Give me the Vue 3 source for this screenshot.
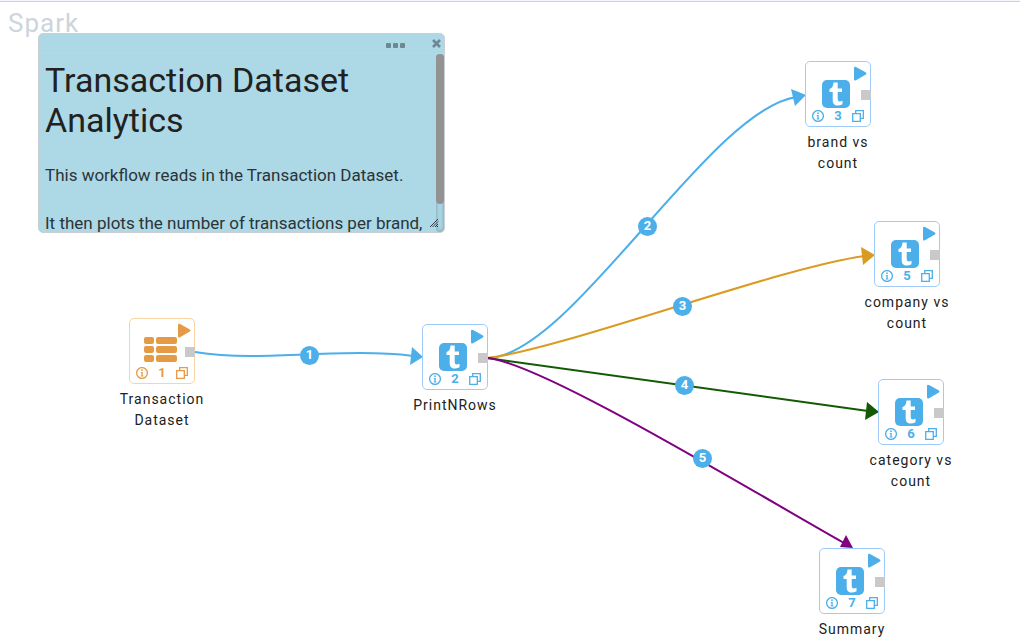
<script setup>
const nodes = [
  { id: 1, x: 129, y: 318, label: 'Transaction Dataset', kind: 'data' },
  { id: 2, x: 422, y: 324, label: 'PrintNRows', kind: 'step' },
  { id: 3, x: 805, y: 61, label: 'brand vs count', kind: 'step' },
  { id: 5, x: 874, y: 221, label: 'company vs count', kind: 'step' },
  { id: 6, x: 878, y: 379, label: 'category vs count', kind: 'step' },
  { id: 7, x: 819, y: 548, label: 'Summary', kind: 'step' }
]

const edges = [
  { id: 1, color: '#4cafe9', d: 'M195 352 C265 363 340 347 413 356', head: '412,347 423,357 410,365', x: 309, y: 355 },
  { id: 2, color: '#4cafe9', d: 'M487 358 C570 358 710 108 797 97', head: '791,89 806,95 795,106', x: 647, y: 226 },
  { id: 3, color: '#da9b22', d: 'M487 358 C560 350 780 267 865 256', head: '861,247 875,255 863,265', x: 682, y: 306 },
  { id: 4, color: '#125a03', d: 'M487 358 L868 411', head: '867,402 879,412 865,420', x: 684, y: 385 },
  { id: 5, color: '#800080', d: 'M487 358 C540 362 750 490 844 543', head: '846,535 853,548 840,547', x: 702, y: 458 }
]
</script>

<template>
  <main class="canvas">
    <h1 class="title">Spark</h1>

    <svg class="edges" aria-hidden="true">
      <g v-for="e in edges" :key="e.id">
        <path :d="e.d" :stroke="e.color" fill="none" stroke-width="2" />
        <polygon :points="e.head" :fill="e.color" />
      </g>
    </svg>

    <span v-for="e in edges" :key="e.id" class="badge" :style="{ left: e.x + 'px', top: e.y + 'px' }">{{ e.id }}</span>

    <section class="note">
      <header class="note-bar">
        <button class="bare" aria-label="More options">
          <svg width="19" height="8" viewBox="0 0 19 8"><rect y="3" width="5" height="5" rx="1" /><rect x="7" y="3" width="5" height="5" rx="1" /><rect x="14" y="3" width="5" height="5" rx="1" /></svg>
        </button>
        <button class="bare close" aria-label="Close">
          <svg width="9" height="9" viewBox="0 0 9 9"><path d="M1 1 L8 8 M8 1 L1 8" stroke-width="2.6" /></svg>
        </button>
      </header>
      <div class="note-body">
        <div class="note-text">
          <h2>Transaction Dataset Analytics</h2>
          <p>This workflow reads in the Transaction Dataset.</p>
          <p>It then plots the number of transactions per brand,</p>
        </div>
        <div class="track"><div class="thumb"></div></div>
      </div>
      <svg class="grip" width="10" height="10" viewBox="0 0 10 10"><path d="M1 9 L9 1 M3.500 9 L9 3.500 M6 9 L9 6 M8 9 L9 8" /></svg>
    </section>

    <article v-for="n in nodes" :key="n.id" class="node" :class="n.kind" :style="{ left: n.x + 'px', top: n.y + 'px' }">
      <div class="box">
        <button class="bare play" aria-label="Run">
          <svg width="14" height="15" viewBox="0 0 14 15"><path d="M1 2 Q1 0 3 1 L12.500 6.200 Q14.500 7.500 12.500 8.700 L3 14.300 Q1 15.200 1 13 Z" /></svg>
        </button>
        <svg v-if="n.kind === 'data'" class="icon" width="33" height="28" viewBox="0 0 33 28">
          <g v-for="r in 3" :key="r">
            <rect x="0" :y="r * 9 - 9" width="10" height="7" rx="2" />
            <rect x="12" :y="r * 9 - 9" width="21" height="7" rx="2" />
          </g>
        </svg>
        <svg v-else class="icon" width="28" height="28" viewBox="0 0 28 28">
          <rect width="28" height="28" rx="5" />
          <path class="mark" d="M11.500 2.500 H15.700 V8.500 H20 V12 H15.700 V18.500 C15.700 21.500 17 22 20.500 20.800 V24.300 C15 26.800 10.700 25.500 10.700 20 V12 H7.500 V9 C10 8.200 11.200 6.500 11.500 2.500 Z" />
        </svg>
        <span class="port"></span>
        <footer>
          <button class="bare" aria-label="Info">
            <svg width="12" height="12" viewBox="0 0 12 12"><circle cx="6" cy="6" r="5.400" class="line" /><path d="M5.200 2.500 h1.600 v1.500 h-1.600 Z M4.800 5 H6.700 V8.500 H7.400 V9.400 H4.700 V8.500 H5.400 V6 H4.800 Z" /></svg>
          </button>
          <b>{{ n.id }}</b>
          <button class="bare" aria-label="Open output">
            <svg width="12" height="12" viewBox="0 0 12 12"><path class="line" d="M.7 3.700 H8.300 V11.300 H.7 Z M3.700 3.700 V.7 H11.300 V8.300 H8.300" /></svg>
          </button>
        </footer>
      </div>
      <div class="label">{{ n.label }}</div>
    </article>
  </main>
</template>

<style>
body { background: #fff; }
</style>

<style scoped>
* { box-sizing: border-box; }
.canvas {
  position: relative;
  min-height: 100vh;
  overflow: hidden;
  border-top: 1px solid #f6f4fd;
  box-shadow: inset 0 1px #d2cfe2;
  font-family: Roboto, sans-serif;
  color: #212121;
}
.title {
  margin: 0;
  padding: 6px 8px;
  font-size: 26px;
  line-height: 32px;
  font-weight: 400;
  letter-spacing: 1px;
  color: #cdd4dc;
}
.edges {
  position: absolute;
  top: -1px;
  left: 0;
  width: 100%;
  height: 100%;
}
.badge {
  position: absolute;
  width: 19px;
  height: 19px;
  margin: -10px 0 0 -9px;
  border-radius: 50%;
  background: #4cafe9;
  color: #fff;
  font-size: 13px;
  font-weight: 700;
  line-height: 18px;
  text-align: center;
}
.bare {
  display: flex;
  padding: 0;
  border: 0;
  background: none;
  color: inherit;
  fill: currentColor;
}
.note {
  position: absolute;
  left: 38px;
  top: 32px;
  width: 407px;
  height: 200px;
  display: flex;
  flex-direction: column;
  overflow: hidden;
  border: 1px solid #cbcfd4;
  border-radius: 5px;
  background: #add8e6;
}
.note-bar {
  display: flex;
  flex: none;
  justify-content: flex-end;
  align-items: center;
  gap: 27px;
  height: 20px;
  padding-right: 3px;
  border-bottom: 1px solid #c6d3dc;
  color: #6c8891;
}
.close { stroke: currentColor; }
.note-body {
  display: flex;
  flex: 1;
  min-height: 0;
}
.note-text {
  flex: 1;
  overflow: hidden;
  padding: 6px;
}
h2 {
  margin: 0 0 23px;
  font-size: 34px;
  font-weight: 400;
  line-height: 40px;
}
p {
  margin: 0 0 24px;
  font-size: 17px;
  line-height: 24px;
  color: #2b3438;
  white-space: nowrap;
}
.track {
  width: 8px;
  border-radius: 5px;
  box-shadow: inset 0 0 4px #7898a5;
}
.thumb {
  height: 84%;
  border-radius: 5px;
  background: #929292;
}
.grip {
  position: absolute;
  right: 5px;
  bottom: 4px;
  stroke: #303a40;
}
.node {
  position: absolute;
  width: 66px;
  margin-top: -1px;
  display: flex;
  flex-direction: column;
  align-items: center;
  color: #4cafe9;
}
.data { color: #e59b46; }
.box {
  position: relative;
  width: 66px;
  height: 66px;
  padding: 18px 6px 0;
  display: flex;
  flex-direction: column;
  border: 1px solid #9fcbfb;
  border-radius: 5px;
  background: #fff;
}
.data .box { border-color: #fbd3a4; }
.play {
  position: absolute;
  left: 47px;
  top: 4px;
}
.icon {
  flex: none;
  margin-left: 10px;
  fill: currentColor;
}
.data .icon { margin-left: 8px; }
.mark { fill: #fff; }
.port {
  position: absolute;
  left: 55px;
  top: 28px;
  width: 10px;
  height: 10px;
  background: #c9c9c9;
}
footer {
  display: flex;
  justify-content: space-between;
  align-items: center;
  height: 16px;
}
footer b {
  font-size: 13px;
  line-height: 16px;
}
.line {
  fill: none;
  stroke: currentColor;
  stroke-width: 1.3;
}
.label {
  width: 96px;
  margin-top: 5px;
  font-size: 14px;
  line-height: 21px;
  letter-spacing: 1px;
  text-align: center;
  color: #212121;
}
</style>
